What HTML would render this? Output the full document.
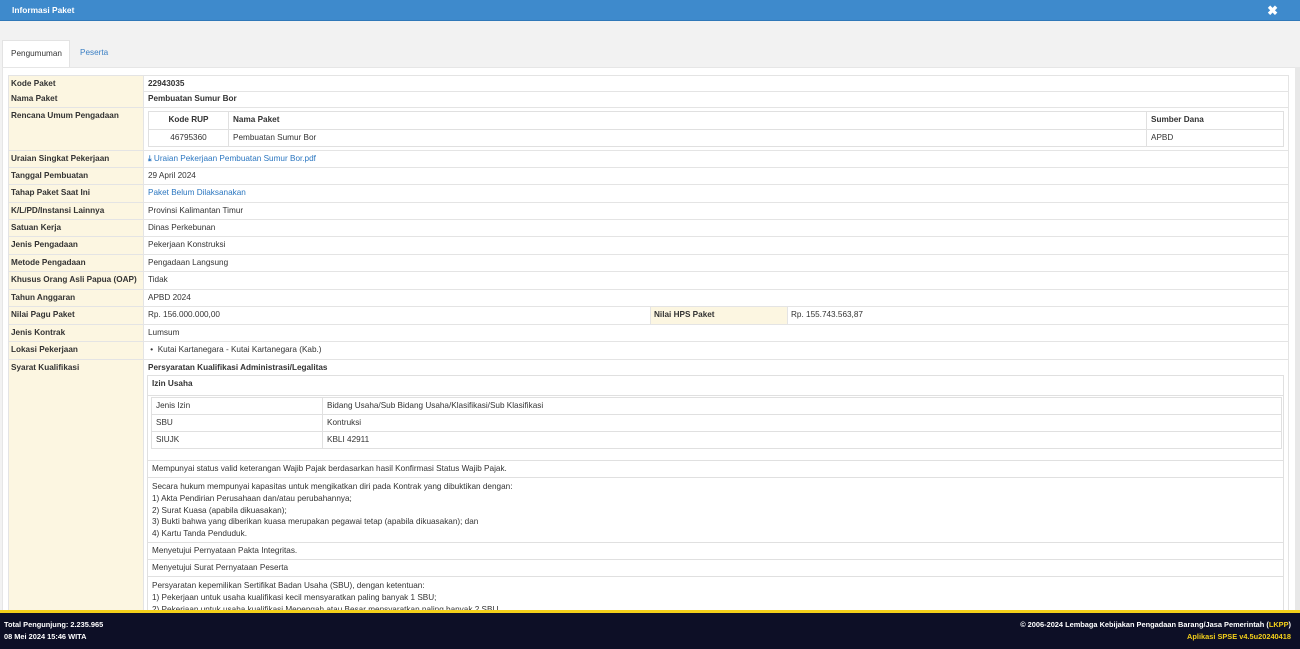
<!DOCTYPE html>
<html><head><meta charset="utf-8"><style>
*{box-sizing:border-box;margin:0;padding:0}
body{width:1300px;height:649px;overflow:hidden;background:#f2f2f2;font-family:"Liberation Sans",Arial,sans-serif;font-size:8.2px;color:#333;position:relative}
.hdr{position:absolute;left:0;top:0;width:1300px;height:21px;background:#3e8acc;border-bottom:1px solid #2f78b8;color:#fff;font-weight:bold;font-size:8.4px;padding:5px 0 0 12px}
.x{position:absolute;right:22px;top:3px;font-size:13px;font-weight:bold}
.tabs{position:absolute;left:2px;top:40px;height:28px}
.tab{position:absolute;top:0;height:28px;padding:8px 0 0 8px}
.t1{left:0;width:68px;background:#fff;border:1px solid #e3e3e3;border-bottom:none}
.t2{left:70px;color:#3a7fc4}
.panel{position:absolute;left:2px;top:67px;width:1294px;height:545px;background:#fff;border:1px solid #e6e6e6;overflow:hidden}
.r{position:absolute;left:5px;width:1281px;border-bottom:1px solid #e4e4e4;border-left:1px solid #e4e4e4;border-right:1px solid #e4e4e4}
.l{position:absolute;left:0;top:0;bottom:0;width:135px;background:#fcf6e1;font-weight:bold;padding:3px 0 0 2px;border-right:1px solid #e4e4e4;white-space:nowrap}
.v{position:absolute;left:139px;top:3px}
a,.lk{color:#2a76c0}
.box{position:absolute;border:1px solid #e0e0e0}
.c{position:absolute;border-bottom:1px solid #e0e0e0;padding:3px 0 0 4px}
.foot{position:absolute;left:0;top:610px;width:1300px;height:39px;background:#0d0f26;border-top:3px solid #f3cf1a;color:#fff;font-weight:bold;font-size:7.4px}
.sb{position:absolute;right:0;top:67px;width:5px;height:543px;background:#e8e8e8}
</style></head><body>
<div class="hdr">Informasi Paket<span class="x">✖</span></div>
<div class="tabs"><div class="tab t1">Pengumuman</div><div class="tab t2">Peserta</div></div>
<div class="panel">
<div class="r" style="top:7px;height:17px;border-top:1px solid #e4e4e4"><div class="l">Kode Paket</div><div class="v" style="font-weight:bold">22943035</div></div>
<div class="r" style="top:23px;height:17px"><div class="l">Nama Paket</div><div class="v" style="font-weight:bold">Pembuatan Sumur Bor</div></div>
<div class="r" style="top:40px;height:43px"><div class="l">Rencana Umum Pengadaan</div>
 <div class="box" style="left:139px;top:3px;width:1136px;height:36px">
  <div class="c" style="left:0;top:0;width:80px;height:18px;font-weight:bold;text-align:center;padding-left:0;border-right:1px solid #e0e0e0">Kode RUP</div>
  <div class="c" style="left:80px;top:0;width:917px;height:18px;font-weight:bold">Nama Paket</div>
  <div class="c" style="left:997px;top:0;width:138px;height:18px;font-weight:bold;border-left:1px solid #e0e0e0">Sumber Dana</div>
  <div class="c" style="left:0;top:18px;width:80px;height:17px;text-align:center;padding-left:0;border:none;border-right:1px solid #e0e0e0">46795360</div>
  <div class="c" style="left:80px;top:18px;width:917px;height:17px;border:none">Pembuatan Sumur Bor</div>
  <div class="c" style="left:997px;top:18px;width:138px;height:17px;border:none;border-left:1px solid #e0e0e0">APBD</div>
 </div></div>
<div class="r" style="top:83px;height:17px"><div class="l">Uraian Singkat Pekerjaan</div><div class="v lk"><b>⤓</b> Uraian Pekerjaan Pembuatan Sumur Bor.pdf</div></div>
<div class="r" style="top:100px;height:17px"><div class="l">Tanggal Pembuatan</div><div class="v">29 April 2024</div></div>
<div class="r" style="top:117px;height:18px"><div class="l">Tahap Paket Saat Ini</div><div class="v lk">Paket Belum Dilaksanakan</div></div>
<div class="r" style="top:135px;height:17px"><div class="l">K/L/PD/Instansi Lainnya</div><div class="v">Provinsi Kalimantan Timur</div></div>
<div class="r" style="top:152px;height:17px"><div class="l">Satuan Kerja</div><div class="v">Dinas Perkebunan</div></div>
<div class="r" style="top:169px;height:18px"><div class="l">Jenis Pengadaan</div><div class="v">Pekerjaan Konstruksi</div></div>
<div class="r" style="top:187px;height:17px"><div class="l">Metode Pengadaan</div><div class="v">Pengadaan Langsung</div></div>
<div class="r" style="top:204px;height:18px"><div class="l">Khusus Orang Asli Papua (OAP)</div><div class="v">Tidak</div></div>
<div class="r" style="top:222px;height:17px"><div class="l">Tahun Anggaran</div><div class="v">APBD 2024</div></div>
<div class="r" style="top:239px;height:18px"><div class="l">Nilai Pagu Paket</div><div class="v">Rp. 156.000.000,00</div>
 <div style="position:absolute;left:641px;top:0;bottom:0;width:138px;background:#fcf6e1;font-weight:bold;padding:3px 0 0 3px;border-left:1px solid #e4e4e4;border-right:1px solid #e4e4e4">Nilai HPS Paket</div>
 <div class="v" style="left:782px">Rp. 155.743.563,87</div></div>
<div class="r" style="top:257px;height:17px"><div class="l">Jenis Kontrak</div><div class="v">Lumsum</div></div>
<div class="r" style="top:274px;height:18px"><div class="l">Lokasi Pekerjaan</div><div class="v">&nbsp;•&nbsp; Kutai Kartanegara - Kutai Kartanegara (Kab.)</div></div>
<div class="r" style="top:292px;height:260px;border-bottom:none"><div class="l">Syarat Kualifikasi</div>
 <div class="v" style="font-weight:bold">Persyaratan Kualifikasi Administrasi/Legalitas</div>
 <div class="box" style="left:138px;top:15px;width:1137px;height:250px">
  <div class="c" style="left:0;top:0;width:1135px;height:20px;font-weight:bold">Izin Usaha</div>
  <div class="box" style="left:3px;top:21px;width:1131px;height:52px">
   <div class="c" style="left:0;top:0;width:171px;height:17px;border-right:1px solid #e0e0e0">Jenis Izin</div>
   <div class="c" style="left:171px;top:0;width:959px;height:17px">Bidang Usaha/Sub Bidang Usaha/Klasifikasi/Sub Klasifikasi</div>
   <div class="c" style="left:0;top:17px;width:171px;height:17px;border-right:1px solid #e0e0e0">SBU</div>
   <div class="c" style="left:171px;top:17px;width:959px;height:17px">Kontruksi</div>
   <div class="c" style="left:0;top:34px;width:171px;height:17px;border:none;border-right:1px solid #e0e0e0">SIUJK</div>
   <div class="c" style="left:171px;top:34px;width:959px;height:17px;border:none">KBLI 42911</div>
  </div>
  <div class="c" style="left:0;top:73px;width:1135px;height:12px"></div>
  <div class="c" style="left:0;top:85px;width:1135px;height:17px">Mempunyai status valid keterangan Wajib Pajak berdasarkan hasil Konfirmasi Status Wajib Pajak.</div>
  <div class="c" style="left:0;top:102px;width:1135px;height:65px;line-height:11.8px">Secara hukum mempunyai kapasitas untuk mengikatkan diri pada Kontrak yang dibuktikan dengan:<br>1) Akta Pendirian Perusahaan dan/atau perubahannya;<br>2) Surat Kuasa (apabila dikuasakan);<br>3) Bukti bahwa yang diberikan kuasa merupakan pegawai tetap (apabila dikuasakan); dan<br>4) Kartu Tanda Penduduk.</div>
  <div class="c" style="left:0;top:167px;width:1135px;height:17px">Menyetujui Pernyataan Pakta Integritas.</div>
  <div class="c" style="left:0;top:184px;width:1135px;height:17px">Menyetujui Surat Pernyataan Peserta</div>
  <div class="c" style="left:0;top:201px;width:1135px;height:50px;line-height:11.8px;border:none">Persyaratan kepemilikan Sertifikat Badan Usaha (SBU), dengan ketentuan:<br>1) Pekerjaan untuk usaha kualifikasi kecil mensyaratkan paling banyak 1 SBU;<br>2) Pekerjaan untuk usaha kualifikasi Menengah atau Besar mensyaratkan paling banyak 2 SBU.</div>
 </div></div>
</div>
<div class="sb"></div>
<div class="foot">
 <div style="position:absolute;left:4px;top:7px">Total Pengunjung: 2.235.965</div>
 <div style="position:absolute;left:4px;top:19px">08 Mei 2024 15:46 WITA</div>
 <div style="position:absolute;right:9px;top:7px">© 2006-2024 Lembaga Kebijakan Pengadaan Barang/Jasa Pemerintah (<span style="color:#f3cf1a">LKPP</span>)</div>
 <div style="position:absolute;right:9px;top:19px;color:#f3cf1a">Aplikasi SPSE v4.5u20240418</div>
</div>
</body></html>
